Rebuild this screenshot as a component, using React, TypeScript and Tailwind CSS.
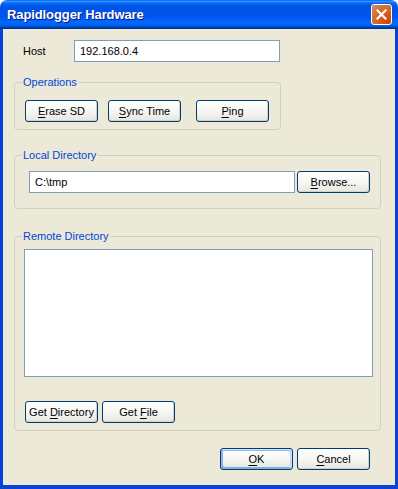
import React from 'react';

// Windows XP (Luna) style dialog
const titleGradient =
  'bg-[linear-gradient(to_bottom,#0058EE_0%,#3593FF_4%,#288EFF_6%,#127DFF_8%,#036FFC_10%,#0262EE_14%,#0057E5_20%,#0054E3_24%,#0055EB_56%,#005BF5_66%,#026AFE_76%,#0062EF_86%,#0052D6_92%,#0040AB_94%,#003092_100%)]';

const XpButton: React.FC<{ mnemonic?: number; label: string; className?: string; isDefault?: boolean }> = ({
  label,
  mnemonic,
  className = '',
  isDefault,
}) => {
  const parts =
    mnemonic === undefined ? (
      label
    ) : (
      <>
        {label.slice(0, mnemonic)}
        <span className="underline underline-offset-[2px]">{label[mnemonic]}</span>
        {label.slice(mnemonic + 1)}
      </>
    );
  return (
    <button
      className={`h-[22px] w-[73px] shrink-0 rounded-[3px] border border-[#003C74] bg-[linear-gradient(180deg,#ffffff_0%,#f4f4f0_60%,#e6e5de_100%)] text-[11px] leading-none text-black ${
        isDefault
          ? 'shadow-[inset_-1px_1px_#cee7ff,inset_1px_2px_#98b8ea,inset_-2px_2px_#bcd4f6,inset_1px_-1px_#89ade4,inset_2px_-2px_#89ade4]'
          : 'shadow-[inset_-1px_-1px_#d6d0c5]'
      } ${className}`}
    >
      {parts}
    </button>
  );
};

const GroupBox: React.FC<{ title: string; className?: string; children: React.ReactNode }> = ({
  title,
  className = '',
  children,
}) => (
  <fieldset className={`rounded-[4px] border border-[#D0D0BF] ${className}`}>
    <legend className="ml-[7px] px-[1px] text-[11px] leading-[13px] text-[#0046D5]">{title}</legend>
    {children}
  </fieldset>
);

export default function App() {
  return (
    <div className="flex h-[489px] w-[398px] flex-col font-['Liberation_Sans',Arial,sans-serif] text-[11px] text-black">
      {/* title bar */}
      <div className={`flex h-[29px] shrink-0 items-center rounded-t-[7px] pl-[7px] pr-[6px] ${titleGradient}`}>
        <span className="text-[13px] font-bold tracking-[-0.1px] text-white [text-shadow:1px_1px_#0A1883]">
          Rapidlogger Hardware
        </span>
        <div className="ml-auto flex h-[21px] w-[21px] items-center justify-center rounded-[3px] border border-white bg-[radial-gradient(circle_at_90%_90%,#CC4600_0%,#DC6527_55%,#CD7546_70%,#E08B65_100%)]">
          <svg width="11" height="11" viewBox="0 0 11 11">
            <path d="M1.5 1.5 L9.5 9.5 M9.5 1.5 L1.5 9.5" stroke="white" strokeWidth="2.2" strokeLinecap="square" />
          </svg>
        </div>
      </div>

      {/* body */}
      <div className="flex flex-1 flex-col border-x-[3px] border-b-[4px] border-[#0842D8] bg-[#ECE9D8] pl-[11px] pr-[14px]">
        {/* host */}
        <div className="mt-[11px] flex h-[22px] items-center">
          <span className="w-[60px] pl-[9px]">Host</span>
          <div className="flex h-[22px] w-[206px] items-center border border-[#7F9DB9] bg-white pl-[5px]">192.168.0.4</div>
        </div>

        <GroupBox title="Operations" className="mt-[14px] w-[267px]">
          <div className="flex pb-[7px] pl-[10px] pt-[11px]">
            <XpButton label="Erase SD" mnemonic={0} />
            <XpButton label="Sync Time" mnemonic={0} className="ml-[10px]" />
            <XpButton label="Ping" mnemonic={0} className="ml-[15px]" />
          </div>
        </GroupBox>

        <GroupBox title="Local Directory" className="mt-[19px] w-[367px]">
          <div className="flex pb-[15px] pl-[14px] pt-[9px]">
            <div className="flex h-[22px] w-[266px] items-center border border-[#7F9DB9] bg-white pl-[5px]">C:\tmp</div>
            <XpButton label="Browse..." mnemonic={0} className="ml-[2px]" />
          </div>
        </GroupBox>

        <GroupBox title="Remote Directory" className="mt-[21px] w-[367px]">
          <div className="flex flex-col pb-[7px] pl-[9px] pt-[6px]">
            <div className="h-[128px] w-[349px] border border-[#7F9DB9] bg-white" />
            <div className="ml-[1px] mt-[24px] flex gap-[4px]">
              <XpButton label="Get Directory" mnemonic={4} />
              <XpButton label="Get File" mnemonic={4} />
            </div>
          </div>
        </GroupBox>

        <div className="mr-[11px] mt-[17px] flex justify-end gap-[4px]">
          <XpButton label="OK" mnemonic={0} isDefault />
          <XpButton label="Cancel" mnemonic={0} />
        </div>
      </div>
    </div>
  );
}
